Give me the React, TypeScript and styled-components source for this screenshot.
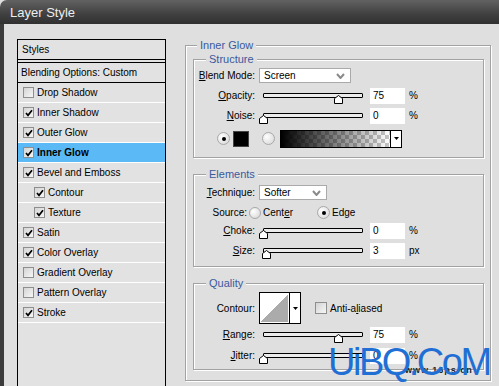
import { createGlobalStyle, styled } from "styled-components";

const GlobalStyle = createGlobalStyle`
  html, body {
    margin: 0;
    padding: 0;
  }
  body {
    background: #dfdfdf;
    font-family: "Liberation Sans", Arial, sans-serif;
    font-size: 10px;
    color: #000;
  }
`;

const Window = styled.div`
  position: relative;
  width: 499px;
  height: 386px;
  overflow: hidden;
  display: flex;
  flex-direction: column;
  background: #dfdfdf;
`;

const TitleBar = styled.div`
  height: 24px;
  flex: none;
  display: flex;
  align-items: center;
  padding-left: 10px;
  background: linear-gradient(#626262, #424242 55%, #303030);
  border-top-left-radius: 7px;
  color: #ededed;
  font-size: 13px;
`;

const Body = styled.div`
  flex: 1;
  display: flex;
  align-items: flex-start;
  gap: 19px;
  padding: 15px 0 0 13px;
  border-left: 4px solid #3b3b3b;
`;

/* ---------- left list ---------- */

const StylesPanel = styled.div`
  width: 149px;
  height: 370px;
  flex: none;
  box-sizing: border-box;
  border: 1px solid #000;
  background: #e2e2e2;
`;

const PanelHead = styled.div`
  height: 19px;
  line-height: 19px;
  padding-left: 4px;
  border-bottom: 1px solid #000;
  margin-bottom: 2px;
`;

const BlendRow = styled.div`
  height: 19px;
  line-height: 19px;
  padding-left: 3px;
  border-top: 1px solid #000;
  border-bottom: 1px solid #000;
`;

const Item = styled.div<{ $level: number; $active?: boolean }>`
  height: 19px;
  display: flex;
  align-items: center;
  gap: 3px;
  padding-left: ${(p) => (p.$level === 2 ? 16 : 5)}px;
  border-bottom: 1px solid #fff;
  background: ${(p) => (p.$active ? "#5bbaf6" : "transparent")};
  font-weight: ${(p) => (p.$active ? 700 : 400)};
`;

const Box = styled.span<{ $size?: number }>`
  width: ${(p) => p.$size ?? 11}px;
  height: ${(p) => p.$size ?? 11}px;
  flex: none;
  box-sizing: border-box;
  border: 1px solid #8e8e8e;
  background: linear-gradient(135deg, #d4d4d4, #f6f6f6);
  display: inline-flex;
  align-items: center;
  justify-content: center;
`;

/* ---------- right side ---------- */

const Group = styled.fieldset<{ $pad: string; $mt?: number; $w?: number }>`
  margin: ${(p) => p.$mt ?? 0}px 0 0;
  padding: ${(p) => p.$pad};
  ${(p) => (p.$w ? `width: ${p.$w}px;` : "")}
  box-sizing: border-box;
  min-width: 0;
  border: 1px solid #a2a2a2;
  box-shadow: inset 1px 1px 0 #fff, 1px 1px 0 #fff;
`;

const Legend = styled.legend<{ $indent: number }>`
  margin-left: ${(p) => p.$indent}px;
  padding: 0 3px;
  font-size: 11px;
  line-height: 12px;
  color: #3a5a9e;
  background: #dfdfdf;
`;

const Row = styled.div<{ $mt?: number; $h?: number; $pl?: number }>`
  display: flex;
  align-items: center;
  height: ${(p) => p.$h ?? 17}px;
  margin-top: ${(p) => p.$mt ?? 0}px;
  padding-left: ${(p) => p.$pl ?? 0}px;
`;

const Label = styled.span<{ $w?: number; $gap?: number }>`
  width: ${(p) => p.$w ?? 61}px;
  margin-right: ${(p) => p.$gap ?? 4}px;
  flex: none;
  text-align: right;
  white-space: nowrap;
`;

const Key = styled.span`
  text-decoration: underline;
`;

const Select = styled.div<{ $w: number }>`
  width: ${(p) => p.$w}px;
  height: 15px;
  box-sizing: border-box;
  display: flex;
  align-items: center;
  justify-content: space-between;
  padding: 0 5px 0 4px;
  background: #fff;
  border: 1px solid #aaa;
`;

const SliderWrap = styled.div`
  position: relative;
  width: 100px;
  height: 17px;
  margin: 0 4px;
  flex: none;
`;

const Track = styled.div`
  margin-top: 6px;
  height: 5px;
  box-sizing: border-box;
  border: 1px solid #000;
  border-radius: 1px;
  background: #ebebeb;
`;

const Thumb = styled.svg`
  position: absolute;
  top: 8px;
  width: 9px;
  height: 9px;
`;

const Field = styled.div`
  width: 35px;
  height: 16px;
  margin-left: 3px;
  padding-left: 3px;
  box-sizing: border-box;
  line-height: 16px;
  background: #fff;
  flex: none;
`;

const Unit = styled.span`
  margin-left: 4px;
`;

const Radio = styled.span<{ $on?: boolean; $size?: number }>`
  width: ${(p) => p.$size ?? 13}px;
  height: ${(p) => p.$size ?? 13}px;
  flex: none;
  box-sizing: border-box;
  border-radius: 50%;
  border: 1px solid #a9a9a9;
  background: radial-gradient(circle at 35% 35%, #fff, #d2d2d2);
  display: inline-flex;
  align-items: center;
  justify-content: center;
  &::after {
    content: "";
    width: 4px;
    height: 4px;
    border-radius: 50%;
    background: #000;
    display: ${(p) => (p.$on ? "block" : "none")};
  }
`;

const Option = styled.span<{ $mr?: number }>`
  display: inline-flex;
  align-items: center;
  gap: 2px;
  margin-right: ${(p) => p.$mr ?? 0}px;
`;

const Swatch = styled.span`
  width: 16px;
  height: 16px;
  margin: 0 13px 0 3px;
  box-sizing: border-box;
  border: 1px solid #444;
  background: #000;
  flex: none;
`;

const GradientBox = styled.div`
  width: 122px;
  height: 18px;
  margin-left: 5px;
  box-sizing: border-box;
  border: 1px solid #000;
  display: flex;
`;

const GradientFill = styled.div`
  flex: 1;
  background: linear-gradient(to right, #000, rgba(0, 0, 0, 0)),
    repeating-conic-gradient(#c6c6c6 0 25%, #fff 0 50%) 0 0 / 8px 8px;
`;

const DropPart = styled.div`
  width: 10px;
  border-left: 1px solid #000;
  background: #fff;
  display: flex;
  align-items: center;
  justify-content: center;
`;

const ContourBox = styled.div`
  width: 42px;
  height: 32px;
  box-sizing: border-box;
  border: 1px solid #000;
  display: flex;
  background: #fff;
`;

const ContourPreview = styled.div`
  flex: 1;
  margin: 1px;
  background: linear-gradient(to top left, #ababab 50%, #fff 50%);
`;

const AntiAlias = styled.span`
  display: inline-flex;
  align-items: center;
  gap: 3px;
  margin-left: 14px;
`;

const SiteTag = styled.div`
  position: absolute;
  left: 405px;
  top: 365px;
  font-size: 9px;
  font-weight: 700;
  letter-spacing: 1px;
  color: #222;
`;

const Watermark = styled.div`
  position: absolute;
  left: 328px;
  top: 343px;
  font-size: 38px;
  line-height: 38px;
  letter-spacing: -2.5px;
  color: #1f6fd5;
`;

const Check = () => (
  <svg width="8" height="8" viewBox="0 0 8 8">
    <path d="M1 4 L3 6.3 L7 1.3" fill="none" stroke="#000" strokeWidth="1.7" />
  </svg>
);

const Chevron = () => (
  <svg width="9" height="6" viewBox="0 0 9 6">
    <polyline points="1,1 4.5,5 8,1" fill="none" stroke="#8a8a8a" strokeWidth="2" />
  </svg>
);

const DownTri = () => (
  <svg width="5" height="3" viewBox="0 0 5 3">
    <polygon points="0,0 5,0 2.5,3" fill="#000" />
  </svg>
);

function Slider({ pct }: { pct: number }) {
  return (
    <SliderWrap>
      <Track />
      <Thumb viewBox="0 0 9 9" style={{ left: `calc(${pct}% - 4.5px)` }}>
        <polygon points="0.5,8.5 0.5,3.5 4.5,0.5 8.5,3.5 8.5,8.5" fill="#fff" stroke="#000" />
      </Thumb>
    </SliderWrap>
  );
}

const items = [
  { label: "Drop Shadow", on: false, level: 1 },
  { label: "Inner Shadow", on: true, level: 1 },
  { label: "Outer Glow", on: true, level: 1 },
  { label: "Inner Glow", on: true, level: 1, active: true },
  { label: "Bevel and Emboss", on: true, level: 1 },
  { label: "Contour", on: true, level: 2 },
  { label: "Texture", on: true, level: 2 },
  { label: "Satin", on: true, level: 1 },
  { label: "Color Overlay", on: true, level: 1 },
  { label: "Gradient Overlay", on: false, level: 1 },
  { label: "Pattern Overlay", on: false, level: 1 },
  { label: "Stroke", on: true, level: 1 },
];

export default function App() {
  return (
    <>
      <GlobalStyle />
      <Window>
        <TitleBar>Layer Style</TitleBar>
        <Body>
          <StylesPanel>
            <PanelHead>Styles</PanelHead>
            <BlendRow>Blending Options: Custom</BlendRow>
            {items.map((it) => (
              <Item key={it.label} $level={it.level} $active={it.active}>
                <Box>{it.on ? <Check /> : null}</Box>
                {it.label}
              </Item>
            ))}
          </StylesPanel>

          <Group $pad="2px 6px 10px 7px" $w={306}>
            <Legend $indent={4}>Inner Glow</Legend>

            <Group $pad="2px 0 10px 0">
              <Legend $indent={12}>Structure</Legend>
              <Row>
                <Label>
                  <Key>B</Key>lend Mode:
                </Label>
                <Select $w={92}>
                  Screen
                  <Chevron />
                </Select>
              </Row>
              <Row $mt={3}>
                <Label>
                  <Key>O</Key>pacity:
                </Label>
                <Slider pct={75} />
                <Field>75</Field>
                <Unit>%</Unit>
              </Row>
              <Row $mt={3}>
                <Label>
                  <Key>N</Key>oise:
                </Label>
                <Slider pct={0} />
                <Field>0</Field>
                <Unit>%</Unit>
              </Row>
              <Row $mt={6} $pl={23}>
                <Radio $on />
                <Swatch />
                <Radio />
                <GradientBox>
                  <GradientFill />
                  <DropPart>
                    <DownTri />
                  </DropPart>
                </GradientBox>
              </Row>
            </Group>

            <Group $pad="4px 0 7px 0" $mt={10}>
              <Legend $indent={12}>Elements</Legend>
              <Row>
                <Label>
                  <Key>T</Key>echnique:
                </Label>
                <Select $w={68}>
                  Softer
                  <Chevron />
                </Select>
              </Row>
              <Row $mt={3}>
                <Label $w={53} $gap={2}>
                  Source:
                </Label>
                <Option $mr={24}>
                  <Radio $size={12} />
                  <span>
                    Cent<Key>e</Key>r
                  </span>
                </Option>
                <Option>
                  <Radio $size={13} $on />
                  Edge
                </Option>
              </Row>
              <Row $mt={1}>
                <Label>
                  <Key>C</Key>hoke:
                </Label>
                <Slider pct={0} />
                <Field>0</Field>
                <Unit>%</Unit>
              </Row>
              <Row $mt={3}>
                <Label>
                  <Key>S</Key>ize:
                </Label>
                <Slider pct={3} />
                <Field>3</Field>
                <Unit>px</Unit>
              </Row>
            </Group>

            <Group $pad="3px 0 5px 0" $mt={10}>
              <Legend $indent={12}>Quality</Legend>
              <Row $h={32}>
                <Label>Contour:</Label>
                <ContourBox>
                  <ContourPreview />
                  <DropPart>
                    <DownTri />
                  </DropPart>
                </ContourBox>
                <AntiAlias>
                  <Box $size={12} />
                  <span>
                    Anti-a<Key>l</Key>iased
                  </span>
                </AntiAlias>
              </Row>
              <Row $mt={2}>
                <Label>
                  <Key>R</Key>ange:
                </Label>
                <Slider pct={75} />
                <Field>75</Field>
                <Unit>%</Unit>
              </Row>
              <Row $mt={4}>
                <Label>
                  <Key>J</Key>itter:
                </Label>
                <Slider pct={0} />
                <Field>0</Field>
                <Unit>%</Unit>
              </Row>
            </Group>
          </Group>
        </Body>
        <SiteTag>www.16ps.cn</SiteTag>
        <Watermark>UiBQ.CoM</Watermark>
      </Window>
    </>
  );
}
